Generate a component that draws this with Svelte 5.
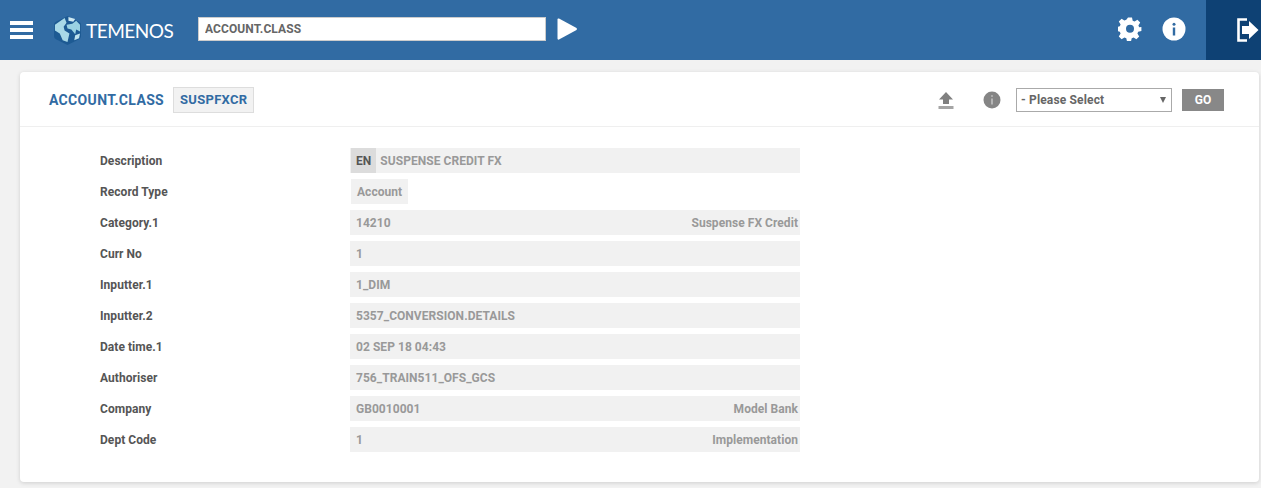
<script lang="ts">
  const rows = [
    { label: "Description", value: "SUSPENSE CREDIT FX", lang: "EN" },
    { label: "Record Type", value: "Account", short: true },
    { label: "Category.1", value: "14210", note: "Suspense FX Credit" },
    { label: "Curr No", value: "1" },
    { label: "Inputter.1", value: "1_DIM" },
    { label: "Inputter.2", value: "5357_CONVERSION.DETAILS" },
    { label: "Date time.1", value: "02 SEP 18 04:43" },
    { label: "Authoriser", value: "756_TRAIN511_OFS_GCS" },
    { label: "Company", value: "GB0010001", note: "Model Bank" },
    { label: "Dept Code", value: "1", note: "Implementation" },
  ];
</script>

<div class="page">
  <header class="topbar">
    <div class="menu-icon"><span></span><span></span><span></span></div>
    <div class="brand">
      <svg class="globe" width="27" height="29" viewBox="0 0 28 30">
        <path d="M14 0 L26 6 Q28 7 28 9 V21 Q28 23 26 24 L14 30 L2 24 Q0 23 0 21 V9 Q0 7 2 6 Z" fill="#1d5a93" />
        <path d="M1 9 L11 2 L13 7 L10 11 L11 15 L16 18 L14 27 L9 25 L6 18 L1 15 Z" fill="#a9d9e8" />
        <path d="M15 1 L22 3 L20 6 L15 5 Z" fill="#cfeaf2" />
        <path d="M13 9 L19 8 L23 5 L27 9 L27 16 L23 14 L22 19 L18 14 L14 13 Z" fill="#9ad2e3" />
        <path d="M22 20 L27 18 L26 23 L21 25 Z" fill="#bfe3ee" />
      </svg>
      <span class="wordmark">TEMENOS</span>
    </div>
    <input class="command" type="text" value="ACCOUNT.CLASS" />
    <svg class="run" width="21" height="24" viewBox="0 0 21 24">
      <path d="M2 1.5 L19.5 11 Q20.5 12 19.5 13 L2 22.5 Q0.5 23 0.5 21.5 V2.5 Q0.5 1 2 1.5 Z" fill="#fff" />
    </svg>
    <div class="spacer"></div>
    <svg class="tool" width="24" height="24" viewBox="0 0 24 24">
      <path fill="#fff" fill-rule="evenodd" d="M10 1h4l.7 3.2 1.9.8 2.8-1.8 2.8 2.8-1.8 2.8.8 1.9L23.4 10.4v4l-3.2.7-.8 1.9 1.8 2.8-2.8 2.8-2.8-1.8-1.9.8-.7 3.2h-4l-.7-3.2-1.9-.8-2.8 1.8-2.8-2.8 1.8-2.8-.8-1.9-3.2-.7v-4l3.2-.7.8-1.9-1.8-2.8 2.8-2.8 2.8 1.8 1.9-.8zM12 8.2a4 4 0 1 0 0 8 4 4 0 0 0 0-8z" transform="translate(0 -.4)" />
    </svg>
    <svg class="tool info" width="24" height="24" viewBox="0 0 24 24">
      <circle cx="12" cy="12" r="11.5" fill="#fff" />
      <circle cx="12" cy="7.3" r="1.5" fill="#316ba3" />
      <rect x="10.8" y="10.5" width="2.4" height="8" fill="#316ba3" />
    </svg>
    <div class="logout">
      <svg width="22" height="24" viewBox="0 0 22 24">
        <path d="M10 1.5 H1.5 V22.5 H10" fill="none" stroke="#fff" stroke-width="2.6" />
        <path d="M5 8 H12 V3 L21.5 12 L12 21 V16 H5 Z" fill="#fff" />
      </svg>
    </div>
  </header>

  <main class="card">
    <div class="card-head">
      <span class="title">ACCOUNT.CLASS</span>
      <span class="record-id">SUSPFXCR</span>
      <div class="spacer"></div>
      <svg class="upload" width="16" height="18" viewBox="0 0 16 18">
        <path d="M8 1 L15 8.5 H11 V13 H5 V8.5 H1 Z" fill="#808080" />
        <rect x="0.5" y="15" width="15" height="3" fill="#a5a5a5" />
      </svg>
      <svg class="about" width="18" height="18" viewBox="0 0 18 18">
        <circle cx="9" cy="9" r="8.5" fill="#858585" />
        <circle cx="9" cy="5" r="1.1" fill="#b5b5b5" />
        <rect x="8" y="7.5" width="2" height="6" fill="#b5b5b5" />
      </svg>
      <div class="select">
        <span>- Please Select</span>
        <i class="caret"></i>
      </div>
      <button class="go" type="button">GO</button>
    </div>

    <div class="fields">
      {#each rows as row}
        <div class="row">
          <div class="label">{row.label}</div>
          <div class="value" class:short={row.short}>
            {#if row.lang}<span class="lang">{row.lang}</span>{/if}
            <span class="text">{row.value}</span>
            {#if row.note}<span class="note">{row.note}</span>{/if}
          </div>
        </div>
      {/each}
    </div>
  </main>
</div>

<style>
  :global(body) {
    margin: 0;
    background: #f2f2f2;
  }

  .page {
    height: 488px;
    overflow: hidden;
    font-family: Roboto, "Liberation Sans", sans-serif;
    font-size: 12px;
    font-weight: 700;
    letter-spacing: 0.05px;
  }

  .topbar {
    display: flex;
    align-items: center;
    height: 60px;
    padding-left: 10px;
    background: #316ba3;
  }

  .menu-icon {
    display: flex;
    flex-direction: column;
    gap: 3px;
    width: 23px;
    margin-right: 21px;
  }

  .menu-icon span {
    height: 4px;
    background: #fff;
  }

  .brand {
    display: flex;
    align-items: center;
    gap: 5px;
    width: 144px;
  }

  .wordmark {
    font-family: Lato, sans-serif;
    font-weight: 400;
    font-size: 19px;
    letter-spacing: -0.5px;
    color: #fff;
  }

  .command {
    box-sizing: border-box;
    width: 348px;
    height: 24px;
    margin-top: -2px;
    padding: 0 6px;
    border: 1px solid #ccc;
    border-radius: 0;
    outline: none;
    background: #fff;
    color: #666;
    font: inherit;
    letter-spacing: 0.1px;
  }

  .run {
    margin-left: 11px;
    margin-top: -2px;
  }

  .spacer {
    flex: 1;
  }

  .tool {
    display: block;
    margin-top: -2px;
  }

  .tool.info {
    margin-left: 20px;
    margin-right: 20px;
  }

  .logout {
    display: flex;
    align-items: center;
    justify-content: flex-end;
    box-sizing: border-box;
    width: 55px;
    height: 60px;
    padding-right: 2px;
    background: #0e4174;
  }

  .card {
    box-sizing: border-box;
    height: 410px;
    margin: 12px 2px 0 20px;
    border-radius: 4px;
    background: #fff;
    box-shadow: 0 1px 4px rgba(0, 0, 0, 0.15);
  }

  .card-head {
    display: flex;
    align-items: center;
    box-sizing: border-box;
    height: 55px;
    padding: 1px 35px 0 29px;
    border-bottom: 1px solid #efefef;
  }

  .title {
    color: #316ba3;
    font-size: 14px;
    letter-spacing: 0.33px;
  }

  .record-id {
    box-sizing: border-box;
    height: 26px;
    margin-left: 9px;
    padding: 0 6px;
    border: 1px solid #ddd;
    background: #f2f2f2;
    color: #316ba3;
    font-size: 13px;
    line-height: 24px;
    letter-spacing: 0.3px;
  }

  .upload {
    margin-right: 29px;
  }

  .about {
    margin-right: 15px;
  }

  .select {
    display: flex;
    align-items: center;
    justify-content: space-between;
    box-sizing: border-box;
    width: 156px;
    height: 24px;
    padding: 0 5px 0 4px;
    border: 1px solid #aaa;
    color: #666;
    letter-spacing: 0.15px;
  }

  .caret {
    width: 0;
    height: 0;
    border-left: 3.5px solid transparent;
    border-right: 3.5px solid transparent;
    border-top: 6px solid #666;
  }

  .go {
    width: 42px;
    height: 22px;
    margin-left: 10px;
    padding: 0;
    border: none;
    background: #888;
    color: #fff;
    font: inherit;
  }

  .fields {
    display: flex;
    flex-direction: column;
    gap: 6px;
    padding-top: 21px;
  }

  .row {
    display: flex;
    align-items: center;
    height: 25px;
    padding-left: 80px;
  }

  .label {
    width: 250px;
    color: #555;
  }

  .value {
    display: flex;
    align-items: center;
    box-sizing: border-box;
    width: 450px;
    height: 25px;
    padding: 0 2px 0 6px;
    background: #f1f1f1;
    color: #999;
  }

  .value.short {
    width: auto;
    padding-right: 6px;
    margin-left: 1px;
    padding-left: 6px;
  }

  .lang {
    display: flex;
    align-items: center;
    align-self: stretch;
    margin: 0 4px 0 -5px;
    padding: 0 5px;
    background: #dcdcdc;
    color: #555;
  }

  .note {
    margin-left: auto;
  }
</style>
